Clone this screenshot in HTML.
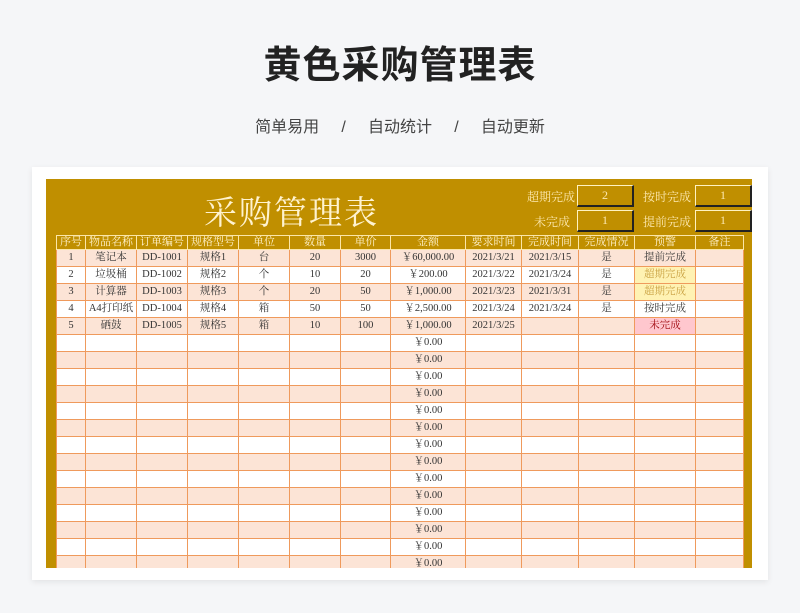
<!DOCTYPE html>
<html><head><meta charset="utf-8"><style>
body{margin:0;width:800px;height:613px;background:#f5f6f8;font-family:"Liberation Sans","Noto Sans CJK SC",sans-serif;position:relative;overflow:hidden}
.t1{position:absolute;top:34px;left:0;width:800px;text-align:center;font-size:38px;font-weight:bold;color:#222;letter-spacing:1px}
.t2{position:absolute;top:113px;left:0;width:800px;text-align:center;font-size:16px;color:#444;word-spacing:0}
.card{position:absolute;left:32px;top:167px;width:736px;height:413px;background:#fff;box-shadow:0 2px 6px rgba(0,0,0,.08)}
.panel{position:absolute;left:46px;top:179px;width:706px;height:389px;background:#c08f00;overflow:hidden;font-family:"Liberation Serif","Noto Serif CJK SC",serif}
.big{position:absolute;left:158px;top:8px;font-size:33px;color:#fff3d0;letter-spacing:2px}
.lab{position:absolute;font-size:12px;color:#fde9b0}
.box{position:absolute;width:54px;height:19px;border:1px solid #fff2c0;border-right:2px solid #222;border-bottom:2px solid #222;color:#fde9b0;font-size:12px;text-align:center;line-height:19px}
table{position:absolute;left:10px;top:56px;border-collapse:collapse;table-layout:fixed}
td{border:1px solid #ef9a5c;height:16px;padding:0;font-size:10.5px;text-align:center;color:#333;white-space:nowrap;overflow:hidden;line-height:16px}
tr.h td{background:#c08f00;color:#fff2cc;border:1px solid #fbe6a8;height:13px;line-height:13px;font-size:11px}
tr:nth-child(even) td{background:#fce4d6}
tr:nth-child(odd):not(.h) td{background:#fff}
td.y{background:#fff2b3!important;color:#c9a040}
td.r{background:#ffc7ce!important;color:#9c0006}
</style></head><body>
<div class="t1">黄色采购管理表</div>
<div class="t2">简单易用&nbsp;&nbsp;&nbsp;&nbsp;&nbsp;/&nbsp;&nbsp;&nbsp;&nbsp;&nbsp;自动统计&nbsp;&nbsp;&nbsp;&nbsp;&nbsp;/&nbsp;&nbsp;&nbsp;&nbsp;&nbsp;自动更新</div>
<div class="card"></div>
<div class="panel">
<div class="big">采购管理表</div>
<div class="lab" style="left:481px;top:9px">超期完成</div>
<div class="box" style="left:531px;top:6px">2</div>
<div class="lab" style="left:597px;top:9px">按时完成</div>
<div class="box" style="left:649px;top:6px">1</div>
<div class="lab" style="left:488px;top:34px">未完成</div>
<div class="box" style="left:531px;top:31px">1</div>
<div class="lab" style="left:597px;top:34px">提前完成</div>
<div class="box" style="left:649px;top:31px">1</div>
<table>
<colgroup><col style="width:29px"><col style="width:51px"><col style="width:51px"><col style="width:51px"><col style="width:51px"><col style="width:51px"><col style="width:50px"><col style="width:75px"><col style="width:56px"><col style="width:57px"><col style="width:56px"><col style="width:61px"><col style="width:48px"></colgroup>
<tr class="h"><td>序号</td><td>物品名称</td><td>订单编号</td><td>规格型号</td><td>单位</td><td>数量</td><td>单价</td><td>金额</td><td>要求时间</td><td>完成时间</td><td>完成情况</td><td>预警</td><td>备注</td></tr>
<tr><td>1</td><td>笔记本</td><td>DD-1001</td><td>规格1</td><td>台</td><td>20</td><td>3000</td><td>￥60,000.00</td><td>2021/3/21</td><td>2021/3/15</td><td>是</td><td>提前完成</td><td></td></tr>
<tr><td>2</td><td>垃圾桶</td><td>DD-1002</td><td>规格2</td><td>个</td><td>10</td><td>20</td><td>￥200.00</td><td>2021/3/22</td><td>2021/3/24</td><td>是</td><td class="y">超期完成</td><td></td></tr>
<tr><td>3</td><td>计算器</td><td>DD-1003</td><td>规格3</td><td>个</td><td>20</td><td>50</td><td>￥1,000.00</td><td>2021/3/23</td><td>2021/3/31</td><td>是</td><td class="y">超期完成</td><td></td></tr>
<tr><td>4</td><td>A4打印纸</td><td>DD-1004</td><td>规格4</td><td>箱</td><td>50</td><td>50</td><td>￥2,500.00</td><td>2021/3/24</td><td>2021/3/24</td><td>是</td><td>按时完成</td><td></td></tr>
<tr><td>5</td><td>硒鼓</td><td>DD-1005</td><td>规格5</td><td>箱</td><td>10</td><td>100</td><td>￥1,000.00</td><td>2021/3/25</td><td></td><td></td><td class="r">未完成</td><td></td></tr>
<tr><td></td><td></td><td></td><td></td><td></td><td></td><td></td><td>￥0.00</td><td></td><td></td><td></td><td></td><td></td></tr>
<tr><td></td><td></td><td></td><td></td><td></td><td></td><td></td><td>￥0.00</td><td></td><td></td><td></td><td></td><td></td></tr>
<tr><td></td><td></td><td></td><td></td><td></td><td></td><td></td><td>￥0.00</td><td></td><td></td><td></td><td></td><td></td></tr>
<tr><td></td><td></td><td></td><td></td><td></td><td></td><td></td><td>￥0.00</td><td></td><td></td><td></td><td></td><td></td></tr>
<tr><td></td><td></td><td></td><td></td><td></td><td></td><td></td><td>￥0.00</td><td></td><td></td><td></td><td></td><td></td></tr>
<tr><td></td><td></td><td></td><td></td><td></td><td></td><td></td><td>￥0.00</td><td></td><td></td><td></td><td></td><td></td></tr>
<tr><td></td><td></td><td></td><td></td><td></td><td></td><td></td><td>￥0.00</td><td></td><td></td><td></td><td></td><td></td></tr>
<tr><td></td><td></td><td></td><td></td><td></td><td></td><td></td><td>￥0.00</td><td></td><td></td><td></td><td></td><td></td></tr>
<tr><td></td><td></td><td></td><td></td><td></td><td></td><td></td><td>￥0.00</td><td></td><td></td><td></td><td></td><td></td></tr>
<tr><td></td><td></td><td></td><td></td><td></td><td></td><td></td><td>￥0.00</td><td></td><td></td><td></td><td></td><td></td></tr>
<tr><td></td><td></td><td></td><td></td><td></td><td></td><td></td><td>￥0.00</td><td></td><td></td><td></td><td></td><td></td></tr>
<tr><td></td><td></td><td></td><td></td><td></td><td></td><td></td><td>￥0.00</td><td></td><td></td><td></td><td></td><td></td></tr>
<tr><td></td><td></td><td></td><td></td><td></td><td></td><td></td><td>￥0.00</td><td></td><td></td><td></td><td></td><td></td></tr>
<tr><td></td><td></td><td></td><td></td><td></td><td></td><td></td><td>￥0.00</td><td></td><td></td><td></td><td></td><td></td></tr>
</table>
</div>
</body></html>
